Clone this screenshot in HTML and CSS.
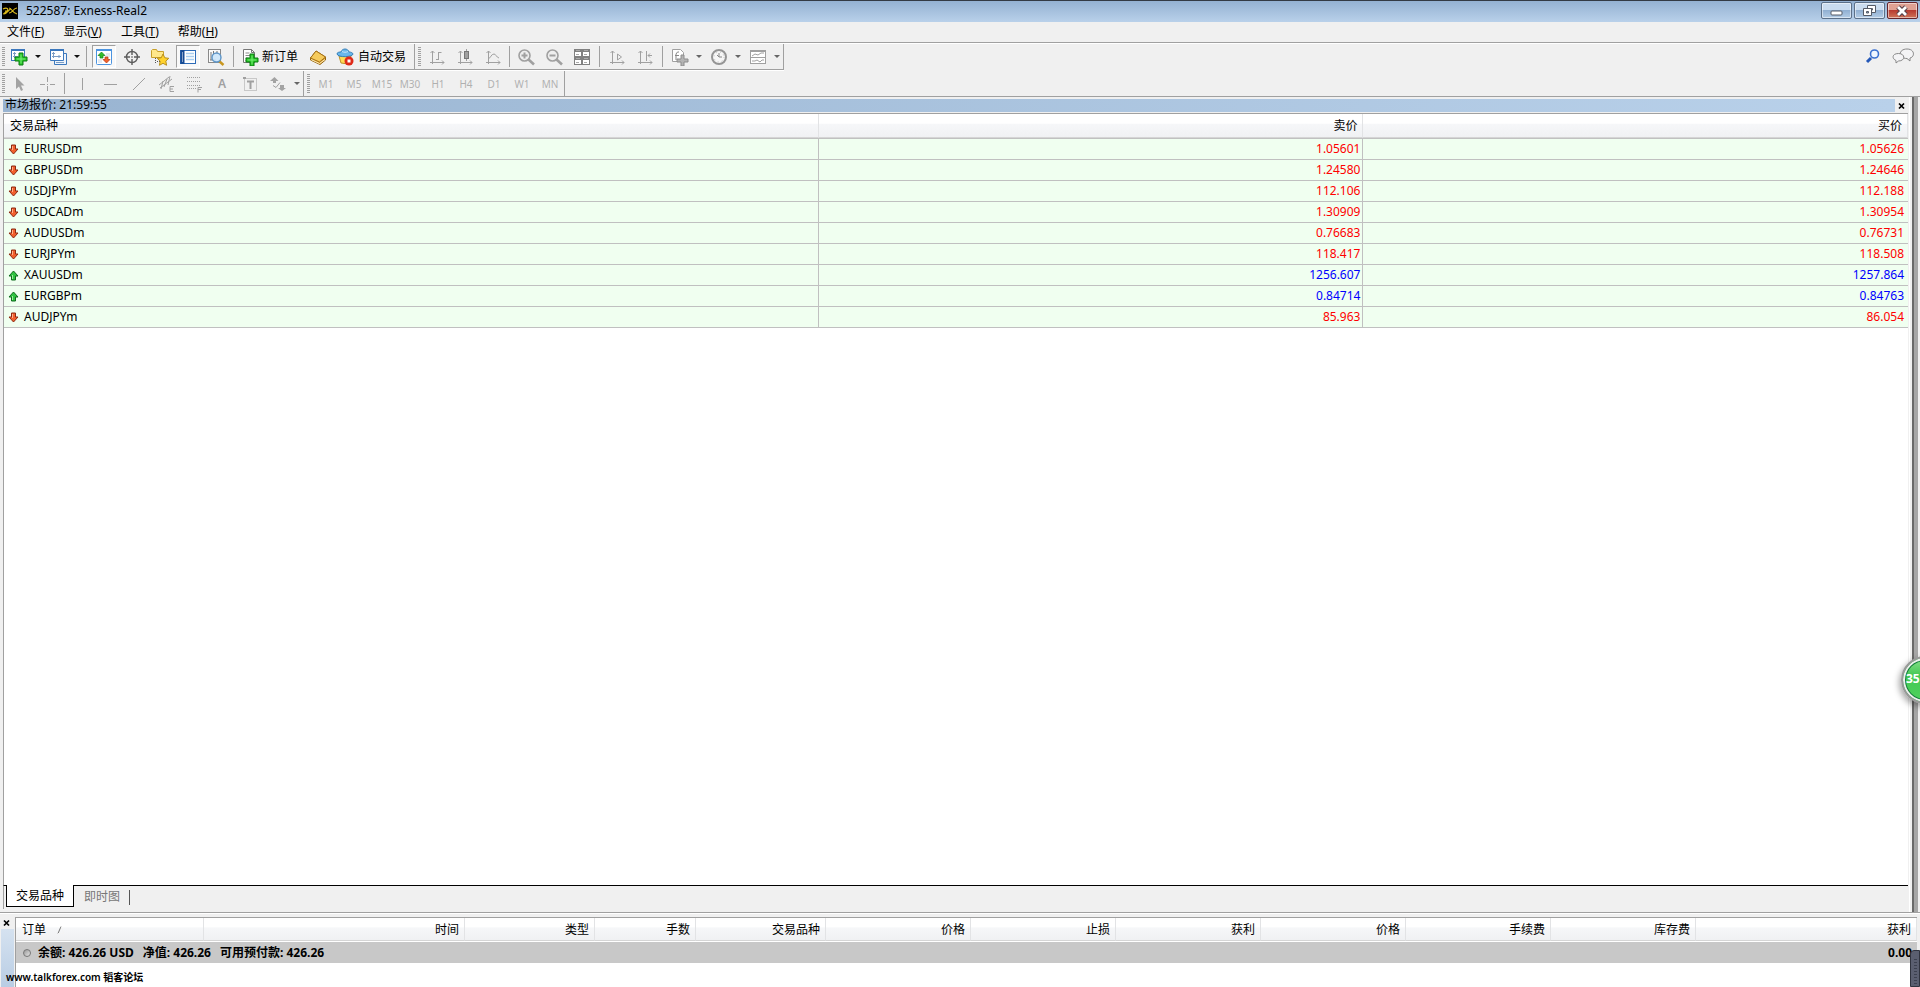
FILE: index.html
```html
<!DOCTYPE html>
<html lang="zh-CN">
<head>
<meta charset="utf-8">
<title>522587: Exness-Real2</title>
<link rel="stylesheet" href="styles.css">
</head>
<body>
<div class="app">
  <header class="titlebar">
    <svg class="app-icon" viewBox="0 0 16 16"><rect width="16" height="16" fill="#000"/><path d="M1 6c4-2 6 0 4 2s-4 3-3 3c3 0 5-5 7-5M7 5c3 0 3 5 8 6M15 5c-4 0-4 5-8 5M3 8h4" fill="none" stroke="#d9b91c" stroke-width="1.200"/></svg>
    <h1 class="title">522587: Exness-Real2</h1>
    <div class="win-buttons">
      <button class="win-btn" aria-label="最小化"><svg viewBox="0 0 28 14"><rect x="9" y="7" width="11" height="4" rx="1" fill="#fff" stroke="#555b66"/></svg></button>
      <button class="win-btn" aria-label="还原"><svg viewBox="0 0 28 14"><g fill="#fff" stroke="#555b66"><path d="M12.500 1.500h8v7h-8zM15.500 4.500h2v1.500h-2z"/><path d="M8.500 4.500h8v7h-8z"/><path d="M11.500 7.500h2v1.500h-2z" fill="#8fadd0"/></g></svg></button>
      <button class="win-btn win-close" aria-label="关闭"><svg viewBox="0 0 28 14"><path d="M10 3l8 8M18 3l-8 8" stroke="#574048" stroke-width="5"/><path d="M10 3l8 8M18 3l-8 8" stroke="#fff" stroke-width="2.800"/></svg></button>
    </div>
  </header>
  <nav class="menu">
    <button>文件(<u>F</u>)</button>
    <button>显示(<u>V</u>)</button>
    <button>工具(<u>T</u>)</button>
    <button>帮助(<u>H</u>)</button>
  </nav>

  <div class="toolbar-area">
    <div class="toolbars">
      <div class="bar-row">
        <div class="group first framed">
          <span class="grip"></span>
          <button class="tool" aria-label="新图表"><svg viewBox="0 0 18 18"><rect x="1.500" y="1.500" width="13" height="11" fill="#fff" stroke="#3c78bd"/><path d="M1 2h14" stroke="#3c78bd" stroke-width="2"/><path d="M4.500 4v6M3 8.500h5M3 5.500h3" stroke="#7b9cc4" fill="none"/><path d="M9 5h4v4h4v4h-4v4H9v-4H5V9h4z" fill="#26c426" stroke="#0b7d12"/><path d="M11 6.500v9M6.500 11h9" stroke="#7cf07a"/></svg></button>
          <button class="drop" aria-label="新图表选项"></button>
          <button class="tool" aria-label="图表窗口"><svg viewBox="0 0 18 18"><path d="M5.500 5.500h12v11h-12z" fill="#eef4fb" stroke="#3c78bd"/><path d="M1.500 1.500h13v11h-13z" fill="#fff" stroke="#3c78bd"/><path d="M1 2h14" stroke="#3c78bd" stroke-width="2"/><path d="M4.500 4v6M3 8.500h9M3 5.500h3M10 7v3M7 14.500h8" stroke="#7b9cc4" fill="none"/></svg></button>
          <button class="drop" aria-label="图表窗口选项"></button>
          <span class="sep"></span>
          <button class="tool pressed" aria-label="市场报价"><svg viewBox="0 0 18 18"><rect x="1.500" y="1.500" width="15" height="15" rx="1" fill="#fff" stroke="#4c94e0"/><path d="M1 2h16" stroke="#4c94e0" stroke-width="2"/><path d="M11 6h4M11 8h4M3 12h4M3 14h4" stroke="#ccd6e2"/><path d="M6.500 4L10 7.500H8V10H5V7.500H3z" fill="#32bd2c" stroke="#168314" stroke-width=".7"/><path d="M11.500 15L8 11.500h2V9h3v2.500h2z" fill="#f0632d" stroke="#b53412" stroke-width=".7"/></svg></button>
          <button class="tool" aria-label="数据窗口"><svg viewBox="0 0 18 18" fill="none" stroke="#5c5c5c"><circle cx="9" cy="9" r="5.500" stroke-width="1.400"/><path d="M9 1v6M9 11v6M1 9h6M11 9h6" stroke-width="1.400"/><path d="M9 8v2"/></svg></button>
          <button class="tool" aria-label="导航"><svg viewBox="0 0 18 18"><path d="M.5 2.500l1-1h4l1 2h6v6H.5z" fill="#ffe88b" stroke="#c8a02b"/><path d="M4.500 10v6M6 13.500h3" stroke="#555" stroke-dasharray="1 1"/><path d="M12 6l1.800 3.800 4 .5-3 2.800.8 4.200-3.600-2-3.600 2 .8-4.200-3-2.800 4-.5z" fill="#ffd22d" stroke="#b8901d"/></svg></button>
          <button class="tool pressed" aria-label="终端"><svg viewBox="0 0 18 18"><rect x="1.500" y="2.500" width="15" height="13" fill="#fff" stroke="#2e6cb8"/><path d="M3.500 2v14" stroke="#174b94" stroke-width="4"/><path d="M3 5h1M3 7h1M3 9h1M3 11h1M3 13h1" stroke="#fff"/><path d="M7 5.500h8M7 8.500h8M7 11.500h8" stroke="#a9cdf0" stroke-width="1.500"/></svg></button>
          <button class="tool" aria-label="策略测试"><svg viewBox="0 0 18 18"><rect x="1.500" y="1.500" width="12" height="13" fill="#fafafa" stroke="#888"/><path d="M4 4v8M6.500 3v4M10 3v3M3 12h6" stroke="#777"/><path d="M12 13l4.500 4" stroke="#c99720" stroke-width="2.500"/><circle cx="9.500" cy="9.500" r="4.500" fill="#cae4fa" fill-opacity=".9" stroke="#5e96c9" stroke-width="1.400"/></svg></button>
          <span class="sep"></span>
          <button class="tool-text order"><svg viewBox="0 0 18 18"><path d="M2.500 1.500h8l3 3v10h-11z" fill="#fff" stroke="#777"/><path d="M10.500 1.500v3h3" fill="none" stroke="#777"/><path d="M4.500 5h4M4.500 7.500h6M4.500 10h3M4.500 12.500h3" stroke="#8b8b8b"/><path d="M9 6h4v4h4v4h-4v4H9v-4H5v-4h4z" fill="#26c426" stroke="#0b7d12"/><path d="M11 7.500v9M6.500 12h9" stroke="#7cf07a"/></svg>新订单</button>
          <button class="tool" aria-label="MetaEditor"><svg viewBox="0 0 18 18"><path d="M1.500 10L7 3l9.500 6v3L11 16.500 1.500 12z" fill="#d99a28" stroke="#946412"/><path d="M1.500 10L7 3l9.500 6-6 5z" fill="#f6cb5c" stroke="#a5721a"/><path d="M2 11.500l8.500 4 5.500-4" fill="none" stroke="#fff0bf"/></svg></button>
          <button class="tool-text auto"><svg viewBox="0 0 18 18"><path d="M3 8l2 7 7 1 3-8z" fill="#ffdc55" stroke="#bd922a"/><path d="M1 6c0-2 3-2 4-2 1-4 7-4 8 0 2 0 4 1 4 2 0 3-15 4-16 0z" fill="#69b7eb" stroke="#367fb8"/><path d="M6 3.500c2 1 4 1 6 0" stroke="#c7e7fa" fill="none"/><circle cx="13" cy="13" r="4.500" fill="#df2a18"/><rect x="11.500" y="11.500" width="3" height="3" fill="#fff"/></svg>自动交易</button>
        </div>
        <div class="group framed gray">
          <span class="grip"></span>
          <button class="tool" aria-label="柱状图"><svg viewBox="0 0 18 18"><path d="M4.500 3v13M2 14.500h14M2.500 5l2-2 2 2M14 12.500l2 2-2 2M10.500 4v8M10.500 4.500h3M8 11.500h2.500"/></svg></button>
          <button class="tool" aria-label="蜡烛图"><svg viewBox="0 0 18 18"><path d="M4.500 3v13M2 14.500h14M2.500 5l2-2 2 2M14 12.500l2 2-2 2M10.500 1v12"/><rect x="8.500" y="3.500" width="4" height="7" fill="#a0a0a0" stroke="#777"/></svg></button>
          <button class="tool" aria-label="折线图"><svg viewBox="0 0 18 18"><path d="M4.500 3v13M2 14.500h14M2.500 5l2-2 2 2M14 12.500l2 2-2 2M4 11c3-1 3-5 6-5 2 0 2 3 5 4"/></svg></button>
          <span class="sep"></span>
          <button class="tool" aria-label="放大"><svg viewBox="0 0 18 18"><path d="M11 11l6 5.500" stroke-width="2.600"/><circle cx="7.500" cy="7.500" r="5.500" fill="#eee" stroke-width="1.600"/><path d="M4.500 7.500h6M7.500 4.500v6" stroke-width="2"/></svg></button>
          <button class="tool" aria-label="缩小"><svg viewBox="0 0 18 18"><path d="M11 11l6 5.500" stroke-width="2.600"/><circle cx="7.500" cy="7.500" r="5.500" fill="#eee" stroke-width="1.600"/><path d="M4.500 7.500h6" stroke-width="2"/></svg></button>
          <button class="tool" aria-label="平铺"><svg viewBox="0 0 18 18"><path d="M1 1h16v16H1z" fill="#808080" stroke="none"/><path d="M2 4h6v4H2zM10 4h6v4h-6zM2 12h6v4H2zM10 12h6v4h-6z" fill="#fff" stroke="none"/><path d="M3 6.500h3M11 6.500h3M3 14.500h3M11 14.500h3M3 2.500h4M11 2.500h4M3 10.500h4M11 10.500h4" stroke="#aaa"/></svg></button>
          <span class="sep wide"></span>
          <button class="tool" aria-label="自动滚动"><svg viewBox="0 0 18 18"><path d="M4.500 3v13M2 14.500h14M2.500 5l2-2 2 2M14 12.500l2 2-2 2M9.500 6v6l4-3z"/></svg></button>
          <button class="tool" aria-label="图表平移"><svg viewBox="0 0 18 18"><path d="M4.500 3v13M2 14.500h14M2.500 5l2-2 2 2M14 12.500l2 2-2 2M10.500 3v10M16 7.500h-4M14 5.500l-2 2 2 2"/></svg></button>
          <span class="sep wide"></span>
          <button class="tool" aria-label="技术指标"><svg viewBox="0 0 18 18"><path d="M1.500 1.500h8l3 3v9h-11z" fill="#fff"/><path d="M8 4H6.500L5 6v6M4 7.500h4" stroke="#888"/><path d="M10 7h3v4h4v3h-4v4h-3v-4H6v-3h4z" fill="#b4b4b4" stroke="#8c8c8c"/></svg></button>
          <button class="drop" aria-label="技术指标选项"></button>
          <button class="tool" aria-label="周期"><svg viewBox="0 0 18 18"><circle cx="9" cy="9" r="7" fill="#f6f6f6" stroke="#959595" stroke-width="2"/><path d="M9 5v4h3M9 9L7 7" stroke="#888"/><circle cx="9" cy="9" r="5" stroke-dasharray="1 3" stroke="#bbb"/></svg></button>
          <button class="drop" aria-label="周期选项"></button>
          <button class="tool" aria-label="模板"><svg viewBox="0 0 18 18"><rect x="1.500" y="2.500" width="15" height="13" fill="#fff"/><path d="M1 3h16" stroke-width="2"/><path d="M1 9.500h16M3 8l3-2 3 1 3-2h3M3 13h3l2-1 3 2 2-2h2"/></svg></button>
          <button class="drop" aria-label="模板选项"></button>
        </div>
      </div>
      <div class="bar-row">
        <div class="group first gray">
          <span class="grip"></span>
          <button class="tool" aria-label="光标"><svg viewBox="0 0 18 18"><path d="M6 2v12l3-2.500 2 4.500 2-1-2-4.500h3.500z" fill="#a3a3a3" stroke="none"/></svg></button>
          <button class="tool" aria-label="十字准线"><svg viewBox="0 0 18 18"><path d="M9.500 2v5M9.500 11v5M2 9.500h5M12 9.500h5M9 9.500h1"/></svg></button>
          <span class="sep wide"></span>
          <button class="tool" aria-label="垂直线"><svg viewBox="0 0 18 18"><path d="M9.500 3v12"/></svg></button>
          <button class="tool" aria-label="水平线"><svg viewBox="0 0 18 18"><path d="M3 9.500h13"/></svg></button>
          <button class="tool" aria-label="趋势线"><svg viewBox="0 0 18 18"><path d="M4 15L16 3"/></svg></button>
          <button class="tool" aria-label="等距通道"><svg viewBox="0 0 18 18"><path d="M2 10l10-8M3 13L15 4M6 6l-2 8M10 4L7 12M13 1l-2 9"/><path d="M17 11.500h-4v5h4M13 14h3"/></svg></button>
          <button class="tool" aria-label="斐波那契"><svg viewBox="0 0 18 18"><path d="M2 2.500h13M2 6.500h13M2 10.500h13M2 13.500h9" stroke-dasharray="1 1"/><path d="M17 12.500h-4v5M13 14.500h3"/></svg></button>
          <button class="tool letter" aria-label="文字">A</button>
          <button class="tool" aria-label="文字标签"><svg viewBox="0 0 18 18"><rect x="3.500" y="3.500" width="12" height="12" stroke-dasharray="1 1"/><path d="M2 3h3" stroke-width="2"/><path d="M6 6.500h7M9.500 7v7" stroke-width="2"/></svg></button>
          <button class="tool" aria-label="箭头"><svg viewBox="0 0 18 18"><path d="M5.500 2l4 4H7v2H4V6H1zM13 16l-4-3h2v-3h4v3h2z" fill="#a3a3a3" stroke="none"/><path d="M4 10.500l3 2 4-5"/></svg></button>
          <button class="drop" aria-label="箭头选项"></button>
        </div>
        <div class="group gray">
          <span class="grip"></span>
          <button class="tool">M1</button><button class="tool">M5</button><button class="tool">M15</button><button class="tool">M30</button><button class="tool">H1</button><button class="tool">H4</button><button class="tool">D1</button><button class="tool">W1</button><button class="tool">MN</button>
        </div>
      </div>
    </div>
    <div class="corner-tools">
      <button aria-label="搜索"><svg viewBox="0 0 18 18"><path d="M3 15l4-4" stroke="#2458b8" stroke-width="3"/><circle cx="10.500" cy="7" r="4" fill="#eef6ff" stroke="#3a70d0" stroke-width="1.600"/></svg></button>
      <button aria-label="聊天"><svg class="chat" viewBox="0 0 22 18"><g fill="#f4f4f6" stroke="#888"><path d="M18 11v3l-3-2.500c-9 0-9-9.500 0-9.500 8 0 8 8 3 9z"/><path d="M4 13.500V16l2.500-2c7 0 7-7.500 0-7.500S0 12 4 13.500z"/></g></svg></button>
    </div>
  </div>

  <div class="workspace">
    <section class="market">
      <div class="caption">
        <h2 class="caption-text">市场报价: 21:59:55</h2>
        <button class="x-btn" aria-label="关闭市场报价"><svg viewBox="0 0 8 8"><path d="M1 1.500l5 5M6 1.500l-5 5" stroke="#000" stroke-width="1.700"/></svg></button>
      </div>
      <div class="market-body">
        <table class="quotes">
          <colgroup><col class="q-symbol"><col class="q-bid"><col></colgroup>
          <thead><tr><th>交易品种</th><th>卖价</th><th>买价</th></tr></thead>
          <tbody>
            <tr class="down"><td><i class="mark"></i>EURUSDm</td><td>1.05601</td><td>1.05626</td></tr>
            <tr class="down"><td><i class="mark"></i>GBPUSDm</td><td>1.24580</td><td>1.24646</td></tr>
            <tr class="down"><td><i class="mark"></i>USDJPYm</td><td>112.106</td><td>112.188</td></tr>
            <tr class="down"><td><i class="mark"></i>USDCADm</td><td>1.30909</td><td>1.30954</td></tr>
            <tr class="down"><td><i class="mark"></i>AUDUSDm</td><td>0.76683</td><td>0.76731</td></tr>
            <tr class="down"><td><i class="mark"></i>EURJPYm</td><td>118.417</td><td>118.508</td></tr>
            <tr class="up"><td><i class="mark"></i>XAUUSDm</td><td>1256.607</td><td>1257.864</td></tr>
            <tr class="up"><td><i class="mark"></i>EURGBPm</td><td>0.84714</td><td>0.84763</td></tr>
            <tr class="down"><td><i class="mark"></i>AUDJPYm</td><td>85.963</td><td>86.054</td></tr>
          </tbody>
        </table>
      </div>
      <div class="tabs">
        <button class="tab active">交易品种</button>
        <button class="tab">即时图</button>
      </div>
    </section>
    <div class="mdi-edge"></div>
  </div>

  <section class="terminal">
    <div class="terminal-side">
      <button class="x-btn" aria-label="关闭终端"><svg viewBox="0 0 8 8"><path d="M1 1.500l5 5M6 1.500l-5 5" stroke="#000" stroke-width="1.700"/></svg></button>
      <div class="side-fill"></div>
    </div>
    <div class="terminal-body">
      <table class="orders">
        <colgroup><col class="c-order"><col class="c-time"><col class="c-type"><col class="c-lots"><col class="c-type"><col class="c-num"><col class="c-num"><col class="c-num"><col class="c-num"><col class="c-num"><col class="c-num"><col></colgroup>
        <thead><tr><th>订单<svg class="sort" viewBox="0 0 8 8"><path d="M1 7.500L4 .5" stroke="#777"/><path d="M4 .5l3 7H1" fill="none" stroke="#f4f4f4"/></svg></th><th>时间</th><th>类型</th><th>手数</th><th>交易品种</th><th>价格</th><th>止损</th><th>获利</th><th>价格</th><th>手续费</th><th>库存费</th><th>获利</th></tr></thead>
        <tbody><tr><td colspan="11"><span class="summary"><i class="dot"></i><span>余额: 426.26 USD</span><span>净值: 426.26</span><span>可用预付款: 426.26</span></span></td><td>0.00</td></tr></tbody>
      </table>
    </div>
  </section>

  <div class="watermark">www.talkforex.com 韬客论坛</div>
  <div class="ball">35</div>
  <div class="dock"></div>
</div>

<svg class="defs" aria-hidden="true"><defs>
  <symbol id="arrow-down" viewBox="0 0 11 11"><path d="M3.500 1h4v4H10L5.500 10 1 5h2.500z" fill="#f2602d" stroke="#8c2a12"/><path d="M4.500 2v4" stroke="#ffb08a"/></symbol>
  <symbol id="arrow-up" viewBox="0 0 11 11"><path d="M3.500 10h4V6H10L5.500 1 1 6h2.500z" fill="#2fc440" stroke="#0d6b1c"/><path d="M4.500 9V5" stroke="#9af09a"/></symbol>
</defs></svg>
<script src="marks.js"></script>
</body>
</html>
```

FILE: marks.js
```js
document.querySelectorAll('.quotes tbody tr').forEach(function (row) {
  var id = row.classList.contains('up') ? 'arrow-up' : 'arrow-down';
  row.querySelector('.mark').innerHTML = '<svg><use href="#' + id + '"/></svg>';
});
```

FILE: styles.css
```css
* { box-sizing: border-box; }

body {
  margin: 0;
  background: #f0f0f0;
  color: #000;
  font: 12px/20px "Noto Sans", "Noto Sans CJK SC", sans-serif;
}

button {
  margin: 0;
  padding: 0;
  border: 0;
  background: none;
  color: inherit;
  font: inherit;
}

svg { display: block; flex: none; }

.defs { position: absolute; width: 0; height: 0; }

.app {
  position: relative;
  display: flex;
  flex-direction: column;
  height: 100vh;
  overflow: hidden;
}

.titlebar {
  display: flex;
  align-items: center;
  height: 22px;
  padding: 0 2px 2px;
  border-top: 1px solid #333a44;
  background: linear-gradient(#94b1d2, #b9d1ea);
}

.app-icon { width: 16px; height: 16px; }

.title {
  flex: 1;
  margin: 0 0 0 8px;
  font-size: 12px;
  font-weight: 400;
}

.win-buttons { display: flex; gap: 2px; align-self: flex-start; padding-top: 1px; }

.win-btn {
  width: 31px;
  height: 17px;
  border: 1px solid #5c7088;
  border-radius: 2px;
  background: linear-gradient(#cadcef 45%, #91b0d2 50%, #b4cde6);
  box-shadow: inset 0 0 0 1px rgba(255, 255, 255, .5);
}

.win-btn svg { width: 28px; height: 14px; }

.win-close {
  border-color: #66242a;
  background: linear-gradient(#dfa193 45%, #b83b30 50%, #cf7458);
}

.menu {
  display: flex;
  gap: 19px;
  height: 21px;
  padding-left: 7px;
  border-bottom: 1px solid #a0a0a0;
  box-shadow: 0 1px #fff;
}

.toolbar-area {
  display: flex;
  justify-content: space-between;
  height: 54px;
  padding-top: 1px;
  border-bottom: 1px solid #a0a0a0;
}

.bar-row { display: flex; height: 27px; }

.group {
  display: flex;
  align-items: center;
  height: 25px;
  border-right: 1px solid #a0a0a0;
}

.framed {
  height: 26px;
  border-bottom: 1px solid #a0a0a0;
  box-shadow: 0 1px #fff;
}

.grip {
  width: 3px;
  height: 19px;
  margin: 0 2px 0 3px;
  background: repeating-linear-gradient(#a0a0a0 0 1px, #f0f0f0 1px 2px);
}

.first .grip { margin: 0 0 0 2px; }

.tool {
  display: flex;
  align-items: center;
  justify-content: center;
  width: 28px;
  height: 24px;
}

.tool svg, .tool-text svg, .corner-tools svg { width: 18px; height: 18px; }

.gray { color: #b0b0b0; font-size: 10px; }
.gray svg { fill: none; stroke: #a0a0a0; }
.gray .letter { color: #a0a0a0; font-size: 12px; font-weight: 600; }

.pressed {
  width: 24px;
  height: 23px;
  margin: 0 2px;
  border: 1px solid #fff;
  border-top-color: #a0a0a0;
  border-left-color: #a0a0a0;
  background: #f8f8f8;
}

.drop {
  display: flex;
  width: 11px;
  padding-left: 2px;
}

.drop::before {
  content: "";
  border: 3px solid transparent;
  border-top-color: #111;
  border-bottom: 0;
}

.gray .drop::before { border-top-color: #666; }

.sep {
  width: 1px;
  height: 21px;
  margin: 0 3px;
  background: #a0a0a0;
}

.gray .sep { margin: 0 2px; }
.gray .wide { margin: 0 3px; }

.tool-text { display: flex; align-items: center; }
.order { gap: 3px; padding: 0 6px 0 4px; }
.auto { gap: 4px; padding: 0 8px 0 4px; }

.corner-tools { display: flex; gap: 10px; padding: 3px 6px 0 0; align-items: flex-start; }
.corner-tools .chat { width: 22px; }

.workspace {
  display: flex;
  flex: 1;
  min-height: 0;
  border-bottom: 1px solid #a0a0a0;
}

.market {
  display: flex;
  flex: 1;
  flex-direction: column;
  padding: 2px 0 3px 3px;
  border-right: 1px solid #fff;
}

.caption { display: flex; height: 14px; }

.caption-text {
  flex: 1;
  height: 13px;
  margin: 0;
  padding-left: 2px;
  background: linear-gradient(90deg, #99b4d1, #b9d1ea);
  font-size: 12px;
  font-weight: 400;
  line-height: 12px;
}

.x-btn {
  display: flex;
  align-items: center;
  justify-content: center;
  width: 14px;
  height: 14px;
}

.x-btn svg { width: 8px; height: 8px; }

.market-body {
  flex: 1;
  margin-right: 1px;
  border-top: 1px solid #a0a0a0;
  border-left: 1px solid #a0a0a0;
  background: #fff;
}

table {
  width: 100%;
  border-spacing: 0;
  table-layout: fixed;
}

th, td { padding: 0; text-align: right; white-space: nowrap; }

th:first-child, td:first-child { text-align: left; }

th {
  border-right: 1px solid #e2e3e5;
  border-bottom: 1px solid #d5d5d5;
  background: linear-gradient(#fff 40%, #f6f7f9 45%, #f0f1f3);
  font-weight: 400;
}

.q-symbol { width: 42.8%; }
.q-bid { width: 28.6%; }

.quotes th { height: 24px; padding: 0 5px 0 6px; }
.quotes tbody tr:first-child td { border-top: 1px solid #c0c0c0; height: 22px; }

.quotes td {
  height: 21px;
  padding: 0 2px;
  border-right: 1px solid #c0c0c0;
  border-bottom: 1px solid #c0c0c0;
  background: #f0fff0;
}

.quotes td:first-child { padding-left: 4px; }
.quotes td:last-child { padding-right: 4px; border-right: 0; }
.down td { color: #f00; }
.up td { color: #00f; }
.quotes td:first-child { color: #000; }

.mark { display: inline-block; width: 11px; height: 11px; margin-right: 5px; vertical-align: -2px; }
.mark svg { width: 11px; height: 11px; }

.tabs {
  display: flex;
  height: 24px;
  margin-right: 1px;
  padding-left: 2px;
  border-top: 1px solid #000;
  border-left: 1px solid #a0a0a0;
}

.tab {
  height: 22px;
  padding: 0 10px;
  color: #777;
}

.tab:last-child { position: relative; }

.tab:last-child::after {
  content: "";
  position: absolute;
  top: 4px;
  right: 0;
  width: 1px;
  height: 15px;
  background: #555;
}

.tabs .active {
  margin-top: -1px;
  padding: 0 9px;
  border: 1px solid #000;
  border-top: 0;
  background: #fff;
  color: #000;
}

.mdi-edge {
  width: 6px;
  margin: 0 2px 0 2px;
  border-left: 2px solid #696969;
  background: #a6a6a6;
}

.terminal {
  display: flex;
  height: 74px;
  padding-top: 4px;
  box-shadow: inset 0 1px #fff;
}

.terminal-side { display: flex; flex-direction: column; width: 15px; padding-left: 1px; }
.terminal-side .x-btn { width: 12px; height: 12px; }
.side-fill { flex: 1; width: 13px; background: linear-gradient(#d5e2f0, #b9cde4); }

.terminal-body {
  flex: 1;
  margin-right: 3px;
  border-top: 1px solid #a0a0a0;
  border-left: 1px solid #a0a0a0;
  background: #fff;
}

.orders th { height: 23px; padding: 1px 5px 0 6px; }
.c-order { width: 188px; }
.c-time { width: 261px; }
.c-type { width: 130px; }
.c-lots { width: 101px; }
.c-num { width: 145px; }

.sort { display: inline-block; width: 8px; height: 8px; margin-left: 11px; }

.orders td {
  height: 22px;
  border-top: 1px solid #fff;
  padding: 0 5px 0 7px;
  background: #c8c8c8;
  font-weight: 700;
}

.summary { display: flex; align-items: center; gap: 9px; }

.dot {
  width: 8px;
  height: 8px;
  margin-right: -2px;
  border: 1px solid #777;
  border-radius: 50%;
  background: linear-gradient(135deg, #999, #e4e4e4);
}

.watermark {
  position: absolute;
  bottom: 0;
  left: 6px;
  font-size: 10px;
  font-weight: 600;
}

.ball {
  position: absolute;
  top: 656px;
  right: -29px;
  width: 48px;
  height: 48px;
  padding-left: 3px;
  border: 2px solid #999;
  border-radius: 50%;
  background: linear-gradient(#8be08d, #43c854 40%, #4fd25d);
  box-shadow: inset 0 0 0 2px #eee, inset 0 0 0 3px #16813c, -2px 3px 6px rgba(0, 0, 0, .35);
  color: #fff;
  font-size: 12px;
  font-weight: 700;
  line-height: 42px;
}

.dock {
  position: absolute;
  right: 0;
  bottom: 0;
  width: 10px;
  height: 37px;
  border: 1px solid #30333f;
  border-radius: 4px 0 0 0;
  background: repeating-linear-gradient(#5a5e70 0 2px, #3c4050 2px 3px) content-box, #5a5e70;
  padding: 6px 2px 0 3px;
}
```
